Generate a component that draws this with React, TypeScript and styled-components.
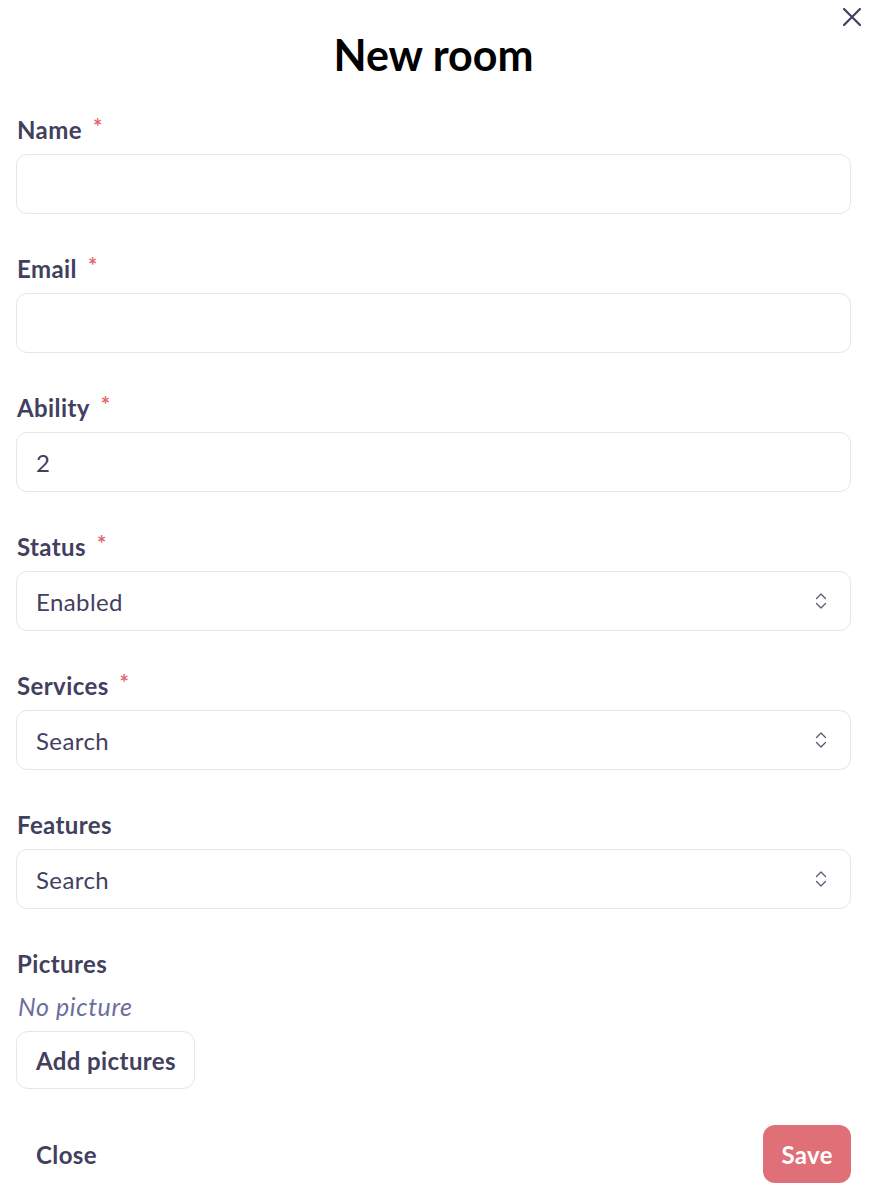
import styled, { createGlobalStyle } from "styled-components";

const GlobalStyle = createGlobalStyle`
  * {
    box-sizing: border-box;
  }
  body {
    margin: 0;
    background: #ffffff;
    font-family: Lato, "Open Sans", sans-serif;
    color: #42405e;
  }
`;

interface Field {
  label: string;
  required?: boolean;
  value?: string;
  select?: boolean;
}

const fields: Field[] = [
  { label: "Name", required: true },
  { label: "Email", required: true },
  { label: "Ability", required: true, value: "2" },
  { label: "Status", required: true, value: "Enabled", select: true },
  { label: "Services", required: true, value: "Search", select: true },
  { label: "Features", value: "Search", select: true },
];

const CloseIcon = () => (
  <svg width="20" height="20" viewBox="0 0 20 20" fill="none">
    <path
      d="M2 2L18 18M18 2L2 18"
      stroke="#42405e"
      strokeWidth="2.2"
      strokeLinecap="round"
    />
  </svg>
);

const UpDownIcon = () => (
  <svg width="14" height="18" viewBox="0 0 14 18" fill="none">
    <path
      d="M2.5 6.5L7 2L11.5 6.5M2.5 11.5L7 16L11.5 11.5"
      stroke="#5a5875"
      strokeWidth="1.3"
      strokeLinecap="round"
      strokeLinejoin="round"
    />
  </svg>
);

export default function App() {
  return (
    <>
      <GlobalStyle />
      <Modal>
        <CloseButton type="button" aria-label="Close">
          <CloseIcon />
        </CloseButton>
        <Title>New room</Title>
        <Form>
          {fields.map((f) => (
            <FieldGroup key={f.label}>
              <Label>
                {f.label}
                {f.required && <Star>*</Star>}
              </Label>
              <InputBox>
                <span>{f.value}</span>
                {f.select && <UpDownIcon />}
              </InputBox>
            </FieldGroup>
          ))}
          <Label>Pictures</Label>
          <Empty>No picture</Empty>
          <OutlineBtn type="button">Add pictures</OutlineBtn>
        </Form>
        <Footer>
          <GhostBtn type="button">Close</GhostBtn>
          <SaveBtn type="button">Save</SaveBtn>
        </Footer>
      </Modal>
    </>
  );
}

const Modal = styled.div`
  position: relative;
  padding: 30px 19px 13px 16px;
`;

const CloseButton = styled.button`
  position: absolute;
  top: 7px;
  right: 8px;
  padding: 0;
  border: none;
  background: none;
  cursor: pointer;
  display: flex;
`;

const Title = styled.h1`
  margin: 0;
  font-size: 43px;
  line-height: 50px;
  font-weight: 700;
  color: #000000;
  text-align: center;
`;

const Form = styled.div`
  display: flex;
  flex-direction: column;
  align-items: flex-start;
  margin-top: 35px;
`;

const FieldGroup = styled.div`
  width: 100%;
  display: flex;
  flex-direction: column;
  gap: 9px;
  margin-bottom: 40px;
`;

const Label = styled.label`
  padding-left: 1px;
  font-size: 24px;
  line-height: 30px;
  font-weight: 700;
  letter-spacing: 0.4px;
  color: #42405e;
`;

const Star = styled.span`
  margin-left: 11px;
  color: #e0666f;
  font-size: 22px;
  vertical-align: top;
  position: relative;
  top: -3px;
`;

const InputBox = styled.div`
  height: 60px;
  width: 100%;
  display: flex;
  align-items: center;
  justify-content: space-between;
  padding: 0 22px 0 19px;
  border: 1px solid #e6e6ea;
  border-radius: 11px;
  font-size: 24px;
  letter-spacing: 0.4px;
  color: #42405e;
`;

const Empty = styled.p`
  margin: 12px 0 0 2px;
  font-size: 25px;
  line-height: 30px;
  font-style: italic;
  letter-spacing: 0.6px;
  color: #6c6f9e;
`;

const OutlineBtn = styled.button`
  margin-top: 10px;
  height: 58px;
  padding: 0 18px 0 19px;
  border: 1px solid #e6e6ea;
  border-radius: 12px;
  background: #ffffff;
  font-family: inherit;
  font-size: 24px;
  font-weight: 700;
  letter-spacing: 0.4px;
  color: #42405e;
  cursor: pointer;
`;

const Footer = styled.div`
  display: flex;
  justify-content: space-between;
  align-items: center;
  margin-top: 36px;
`;

const GhostBtn = styled(OutlineBtn)`
  margin-top: 0;
  border-color: transparent;
`;

const SaveBtn = styled(GhostBtn)`
  padding: 0 17px;
  background: #e07078;
  color: #ffffff;
`;
